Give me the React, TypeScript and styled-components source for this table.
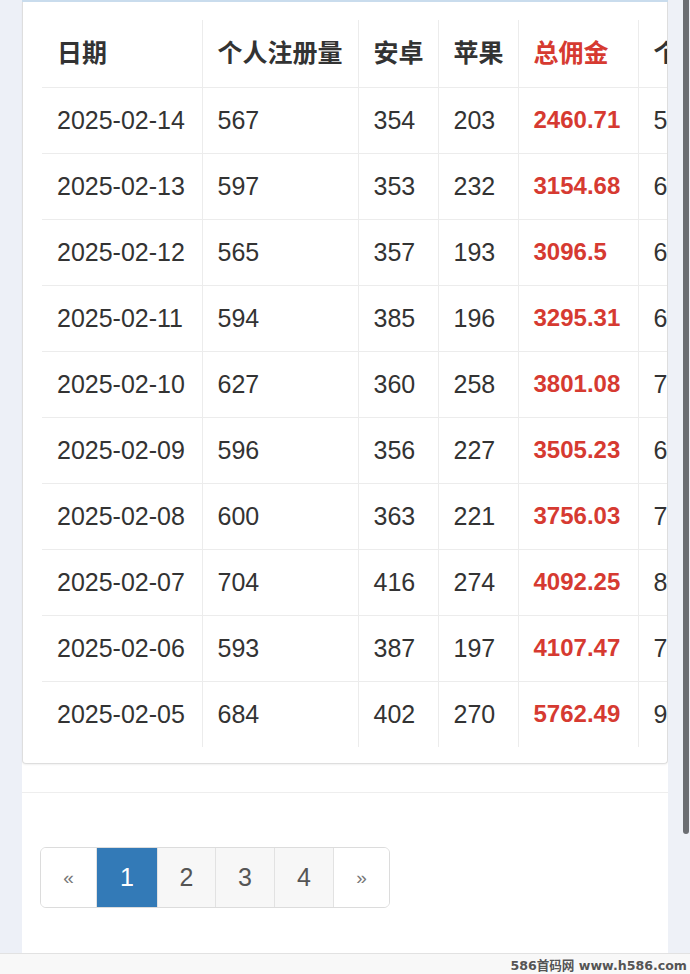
import React from "react";
import styled, { createGlobalStyle } from "styled-components";

const GlobalStyle = createGlobalStyle`
  html, body { margin: 0; padding: 0; }
  body {
    width: 690px;
    height: 974px;
    overflow: hidden;
    background: #f7f7f7;
    font-family: "Liberation Sans", "Noto Sans CJK SC", sans-serif;
    color: #333;
  }
`;

const Page = styled.div`
  display: flex;
  flex-direction: column;
  width: 690px;
  height: 974px;
`;

const Main = styled.div`
  display: flex;
  height: 953px;
`;

const Gutter = styled.div`
  width: 22px;
  flex: none;
  background: #edf0f7;
`;

const RightGutter = styled.div`
  width: 22px;
  flex: none;
  background: #eef1f7;
  display: flex;
  justify-content: flex-end;
  padding-right: 1px;
  box-sizing: border-box;
`;

const ScrollThumb = styled.div`
  width: 6px;
  height: 834px;
  background: #6b6e72;
  border-radius: 0 0 3px 3px;
`;

const Panel = styled.div`
  flex: 1;
  min-width: 0;
  background: #fff;
  border-top: 2px solid #c9dced;
  display: flex;
  flex-direction: column;
`;

const Card = styled.div`
  border: 1px solid #dedede;
  border-top: none;
  border-radius: 0 0 4px 4px;
  box-shadow: 0 1px 2px rgba(0, 0, 0, 0.06);
  padding: 18px 0 16px 19px;
  overflow: hidden;
  background: #fff;
`;

const Table = styled.table`
  border-collapse: collapse;
  table-layout: fixed;
  width: 760px;
  font-size: 25px;
`;

const Th = styled.th<{ $red?: boolean; $w: number }>`
  box-sizing: border-box;
  width: ${(p) => p.$w}px;
  text-align: left;
  font-weight: bold;
  color: ${(p) => (p.$red ? "#d63a31" : "#333")};
  padding: 15px 15px 16px;
  line-height: 36px;
  white-space: nowrap;
  overflow: hidden;
  border-bottom: 1px solid #ececec;
  & + & { border-left: 1px solid #ececec; }
`;

const Tr = styled.tr`
  & + & td { border-top: 1px solid #ececec; }
`;

const Td = styled.td<{ $red?: boolean }>`
  padding: 14px 15px 15px;
  line-height: 36px;
  white-space: nowrap;
  overflow: hidden;
  color: ${(p) => (p.$red ? "#d63a31" : "#333")};
  font-weight: ${(p) => (p.$red ? "bold" : "normal")};
  font-size: ${(p) => (p.$red ? "24px" : "25px")};
  & + & { border-left: 1px solid #ececec; }
`;

const Spacer = styled.div`
  height: 28px;
  border-bottom: 1px solid #eeeeee;
`;

const PagerWrap = styled.div`
  padding: 54px 0 0 18px;
`;

const Pager = styled.ul`
  display: inline-flex;
  list-style: none;
  margin: 0;
  padding: 0;
  border-radius: 6px;
  overflow: hidden;
  border: 1px solid #dcdcdc;
`;

const PageItem = styled.li<{ $active?: boolean; $arrow?: boolean; $w: number }>`
  width: ${(p) => p.$w}px;
  height: 59px;
  display: flex;
  align-items: center;
  justify-content: center;
  box-sizing: border-box;
  font-size: ${(p) => (p.$arrow ? "19px" : "25px")};
  color: ${(p) => (p.$active ? "#fff" : p.$arrow ? "#777" : "#555")};
  background: ${(p) => (p.$active ? "#337ab7" : p.$arrow ? "#fff" : "#f7f7f7")};
  & + & { border-left: 1px solid ${(p) => (p.$active ? "#337ab7" : "#e2e2e2")}; }
`;

const Footer = styled.div`
  flex: 1;
  border-top: 1px solid #e2e2e2;
  background: #f8f8f8;
  display: flex;
  justify-content: flex-end;
  align-items: center;
  padding-right: 3px;
`;

const Watermark = styled.span`
  font-family: "DejaVu Sans", sans-serif;
  font-weight: bold;
  font-size: 12.6px;
  color: #555;
  text-shadow: 0 0 2px #fff;
  & span { font-family: "Noto Sans CJK SC", sans-serif; }
`;

const rows = [
  ["2025-02-14", "567", "354", "203", "2460.71", "524"],
  ["2025-02-13", "597", "353", "232", "3154.68", "612"],
  ["2025-02-12", "565", "357", "193", "3096.5", "633"],
  ["2025-02-11", "594", "385", "196", "3295.31", "658"],
  ["2025-02-10", "627", "360", "258", "3801.08", "745"],
  ["2025-02-09", "596", "356", "227", "3505.23", "687"],
  ["2025-02-08", "600", "363", "221", "3756.03", "731"],
  ["2025-02-07", "704", "416", "274", "4092.25", "802"],
  ["2025-02-06", "593", "387", "197", "4107.47", "776"],
  ["2025-02-05", "684", "402", "270", "5762.49", "915"],
];

const headers: { t: string; w: number; red?: boolean }[] = [
  { t: "日期", w: 160 },
  { t: "个人注册量", w: 156 },
  { t: "安卓", w: 80 },
  { t: "苹果", w: 80 },
  { t: "总佣金", w: 120, red: true },
  { t: "个人佣金", w: 164 },
];

const pages: { t: string; w: number; active?: boolean; arrow?: boolean }[] = [
  { t: "«", w: 55, arrow: true },
  { t: "1", w: 61, active: true },
  { t: "2", w: 58 },
  { t: "3", w: 59 },
  { t: "4", w: 59 },
  { t: "»", w: 56, arrow: true },
];

export default function App() {
  return (
    <>
      <GlobalStyle />
      <Page>
        <Main>
          <Gutter />
          <Panel>
            <Card>
              <Table>
                <thead>
                  <tr>
                    {headers.map((h) => (
                      <Th key={h.t} $w={h.w} $red={h.red}>
                        {h.t}
                      </Th>
                    ))}
                  </tr>
                </thead>
                <tbody>
                  {rows.map((r) => (
                    <Tr key={r[0]}>
                      {r.map((c, i) => (
                        <Td key={i} $red={i === 4}>
                          {c}
                        </Td>
                      ))}
                    </Tr>
                  ))}
                </tbody>
              </Table>
            </Card>
            <Spacer />
            <PagerWrap>
              <Pager>
                {pages.map((p) => (
                  <PageItem key={p.t} $w={p.w} $active={p.active} $arrow={p.arrow}>
                    {p.t}
                  </PageItem>
                ))}
              </Pager>
            </PagerWrap>
          </Panel>
          <RightGutter>
            <ScrollThumb />
          </RightGutter>
        </Main>
        <Footer>
          <Watermark>
            586<span>首码网</span> www.h586.com
          </Watermark>
        </Footer>
      </Page>
    </>
  );
}
